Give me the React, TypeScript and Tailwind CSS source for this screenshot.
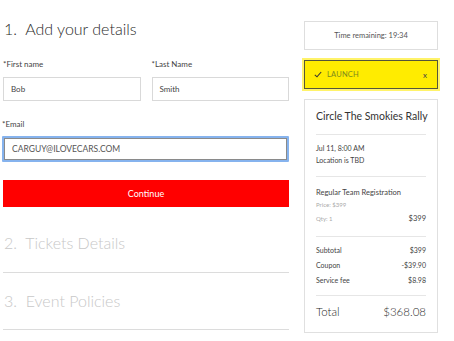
import React from 'react';

const font = { fontFamily: 'Lato, "Open Sans", sans-serif' };

function Field({ label, value, focused }: { label: string; value: string; focused?: boolean }) {
  return (
    <div className="flex flex-col">
      <span className="text-[8px] leading-[12px] text-[#444]">{label}</span>
      {focused ? (
        <div className="mt-[6px] h-[26px] border-2 border-[#86b3ee] rounded-[1px]">
          <div className="h-full border border-[#8a8a8a] flex items-center pl-[7px] text-[8.5px] text-[#555]">
            {value}
          </div>
        </div>
      ) : (
        <div className="mt-[7px] h-[24px] border border-[#d9d9d9] flex items-center pl-[7px] text-[8px] text-[#444]">
          {value}
        </div>
      )}
    </div>
  );
}

function Row({ left, right, className }: { left: string; right: string; className?: string }) {
  return (
    <div className={`flex justify-between ${className ?? ''}`}>
      <span>{left}</span>
      <span>{right}</span>
    </div>
  );
}

export default function App() {
  return (
    <div className="w-[454px] h-[341px] bg-white flex gap-[15px] overflow-hidden" style={font}>
      {/* Left: checkout steps */}
      <div className="ml-[3px] w-[286px] pt-[17px] flex flex-col">
        <h1 className="text-[16px] leading-[24px] font-light text-[#2a2a2a] pl-[1px]">1.&nbsp; Add your details</h1>

        <div className="mt-[17px] grid grid-cols-2 gap-[11px]">
          <Field label="*First name" value="Bob" />
          <Field label="*Last Name" value="Smith" />
        </div>

        <div className="mt-[17px] -ml-[1px]">
          <Field label="*Email" value="CARGUY@ILOVECARS.COM" focused />
        </div>

        <button className="mt-[18px] h-[27px] w-full bg-[#ff0000] text-white text-[9px]">Continue</button>

        <div className="mt-[24px] text-[16px] leading-[24px] font-light text-[#c8c8c8] pl-[1px]">2.&nbsp; Tickets Details</div>
        <div className="mt-[17px] border-t border-[#dcdcdc]" />
        <div className="mt-[16px] text-[16px] leading-[24px] font-light text-[#c8c8c8] pl-[1px]">3.&nbsp; Event Policies</div>
        <div className="mt-[16px] border-t border-[#dcdcdc]" />
      </div>

      {/* Right: order summary */}
      <div className="w-[134px] pt-[21px] flex flex-col">
        <div className="h-[29px] border border-[#dedede] flex items-center justify-center text-[7.5px] text-[#555]">
          Time remaining: 19:34
        </div>

        <div className="mt-[10px] h-[29px] bg-[#ffec00] border border-[#55553a] shadow-[0_0_0_2px_#fff36a] flex items-center pl-[9px] pr-[10px] text-[7.5px]">
          <svg width="8" height="7" viewBox="0 0 8 7" className="shrink-0">
            <path d="M0.8 3.8 L3 5.8 L7.2 1" fill="none" stroke="#333" strokeWidth="1.1" />
          </svg>
          <span className="ml-[5px] text-[#7c8a1c] tracking-[0.2px]">LAUNCH</span>
          <span className="ml-auto text-[#444] text-[8px]">x</span>
        </div>

        <div className="mt-[10px] h-[234px] border border-[#e0e0e0] px-[11px] flex flex-col text-[#444]">
          <div className="h-[35px] flex items-center border-b border-[#e6e6e6] text-[10.5px] whitespace-nowrap text-[#333]">
            Circle The Smokies Rally
          </div>
          <div className="pt-[7px] pb-[10px] border-b border-[#e6e6e6] text-[7px] leading-[12px]">
            <div>Jul 11, 8:00 AM</div>
            <div>Location is TBD</div>
          </div>
          <div className="pt-[10px] pb-[11px] border-b border-[#e6e6e6] text-[7.5px] leading-[12px]">
            <div>Regular Team Registration</div>
            <div className="text-[6px] text-[#aaa]">Price: $399</div>
            <div className="mt-[2px] flex justify-between items-center">
              <span className="text-[6px] text-[#aaa]">Qty: 1</span>
              <span>$399</span>
            </div>
          </div>
          <div className="pt-[7px] pb-[9px] border-b border-[#e6e6e6] text-[7px] leading-[12px] flex flex-col gap-[3px]">
            <Row left="Subtotal" right="$399" />
            <Row left="Coupon" right="-$39.90" />
            <Row left="Service fee" right="$8.98" />
          </div>
          <Row left="Total" right="$368.08" className="pt-[8px] text-[11.5px] leading-[16px] font-light text-[#2a2a2a]" />
        </div>
      </div>
    </div>
  );
}
